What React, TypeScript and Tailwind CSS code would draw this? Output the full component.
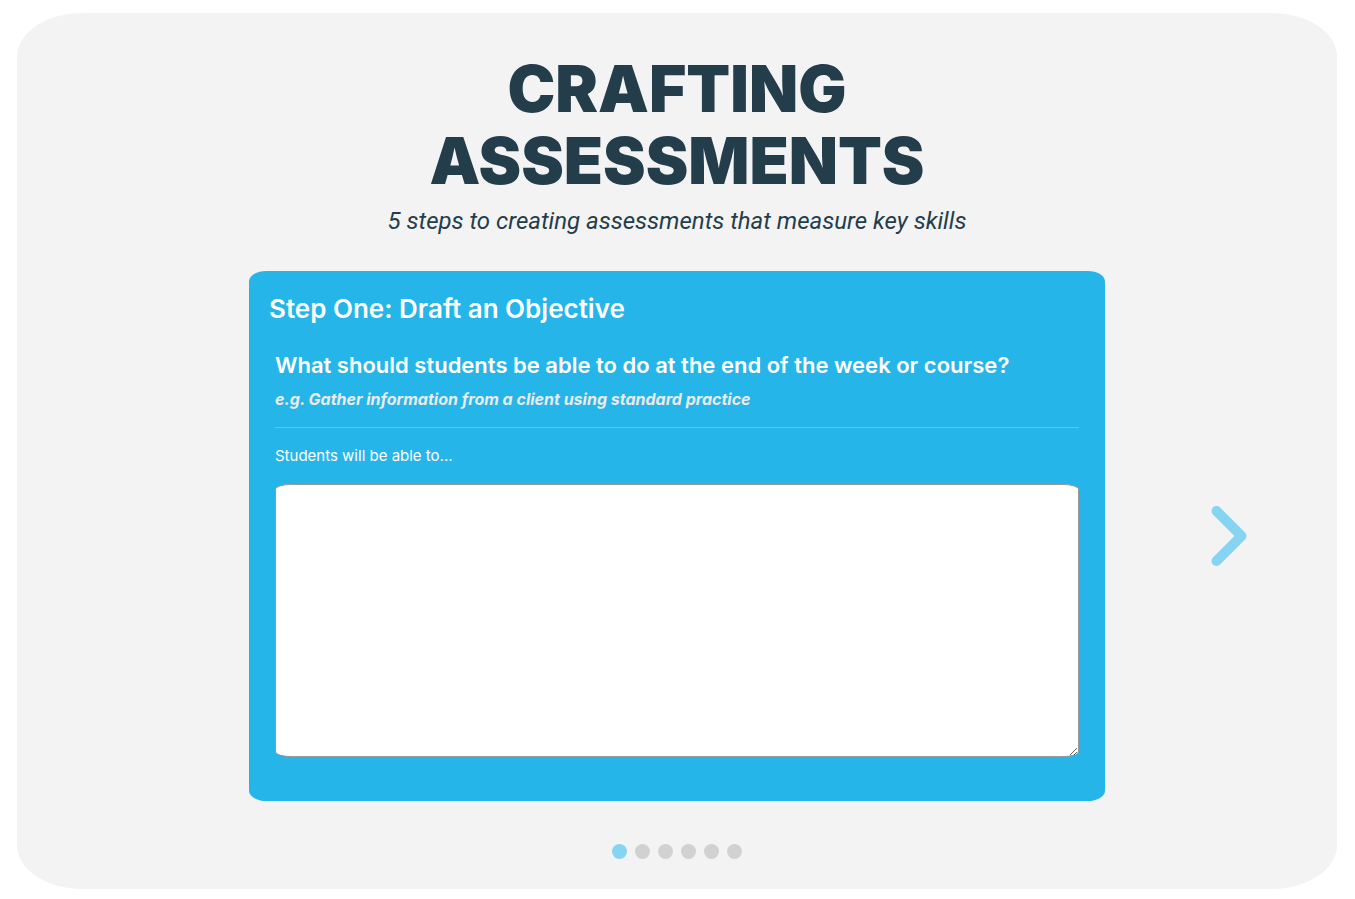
import { useState } from "react";

const steps = [1, 2, 3, 4, 5, 6];

export default function App() {
  const [current, setCurrent] = useState(1);

  return (
    <div className="bg-white pt-[13px] pr-[18px] pb-[10px] pl-[17px] font-['Inter','Liberation_Sans',sans-serif]">
      <main className="flex flex-col items-center rounded-[5%] bg-[#f3f3f3] pt-10 pb-[30px]">
        <header className="flex flex-col items-center text-center text-[#243d4b]">
          <h1 className="max-w-xl text-[64px] leading-[72px] font-black uppercase">
            Crafting Assessments
          </h1>
          <p className="text-[24px] leading-12 font-normal italic font-['Roboto','Liberation_Sans',sans-serif]">
            5 steps to creating assessments that measure key skills
          </p>
        </header>

        <div className="mt-[26px] grid w-full grid-cols-[1fr_65%_1fr] items-center">
          <section className="col-start-2 mx-px rounded-[2%] bg-[#26b5e8] px-5 pt-5 pb-[44px] text-white">
            <h2 className="text-[26px] leading-9 font-semibold">Step One: Draft an Objective</h2>
            <div className="px-[6px] pt-5">
              <h3 className="text-[22px] leading-9 font-semibold">
                What should students be able to do at the end of the week or course?
              </h3>
              <p className="text-[16px] leading-8 font-bold text-[#ebebeb] italic">
                e.g. Gather information from a client using standard practice
              </p>
              <hr className="mt-3 border-[#5ac6ee]" />
              <label htmlFor="objective" className="mt-4 block text-[15px] leading-6">
                Students will be able to...
              </label>
              <textarea
                id="objective"
                className="mt-4 block h-[273px] w-full rounded-[2%] border border-[#999999] bg-white p-2 text-[16px] text-[#243d4b]"
              />
            </div>
          </section>
          <button
            type="button"
            aria-label="Next step"
            onClick={() => setCurrent(Math.min(current + 1, steps.length))}
            className="ml-[14px] justify-self-center text-[#85d4f2]"
          >
            <svg
              width="36"
              height="62"
              viewBox="0 0 36 62"
              fill="none"
              stroke="currentColor"
              strokeWidth="10"
              strokeLinecap="round"
              strokeLinejoin="round"
            >
              <path d="M5.5 6L30.5 31L5.5 56" />
            </svg>
          </button>
        </div>

        <nav aria-label="Steps" className="mt-[43px] flex gap-2">
          {steps.map((step) => (
            <button
              key={step}
              type="button"
              aria-label={`Step ${step}`}
              onClick={() => setCurrent(step)}
              className={`size-[15px] rounded-full ${step === current ? "bg-[#85d4f2]" : "bg-[#d1d1d1]"}`}
            />
          ))}
        </nav>
      </main>
    </div>
  );
}
